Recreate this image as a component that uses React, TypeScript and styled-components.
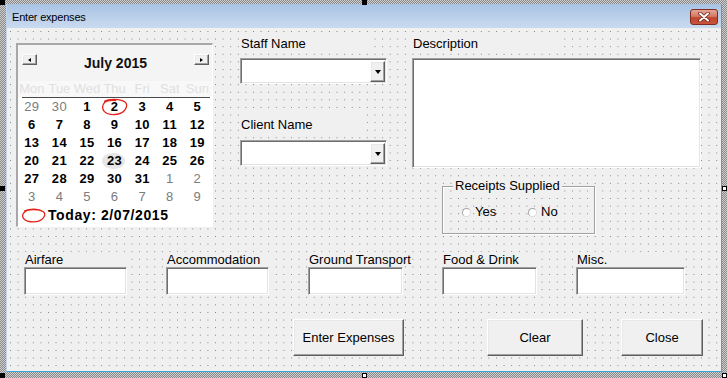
import React from 'react';
import styled, { createGlobalStyle, css } from 'styled-components';

const Global = createGlobalStyle`
  html, body { margin: 0; padding: 0; background: #ffffff; }
  body { font-family: "Liberation Sans", Arial, sans-serif; }
  * { box-sizing: border-box; }
`;

const sunken = css`
  border-style: solid;
  border-width: 1px;
  border-color: #a0a0a0 #ffffff #ffffff #a0a0a0;
  box-shadow: inset 1px 1px 0 #6e6e6e, inset -1px -1px 0 #e3e3e3;
  background: #ffffff;
`;

const raised = css`
  border-style: solid;
  border-width: 1px;
  border-color: #ffffff #5f5f5f #5f5f5f #ffffff;
  box-shadow: inset -1px -1px 0 #a0a0a0, inset 1px 1px 0 #e8e8e8;
  background: #f0f0f0;
`;

const Stage = styled.div`
  position: relative;
  width: 727px;
  height: 378px;
  padding: 4px 5px 6px 6px;
  background: repeating-conic-gradient(#8a8a8a 0 25%, #cdcdcd 0 50%) 0 0 / 2px 2px;
  overflow: hidden;
`;

const Handle = styled.div<{ $x: number; $y: number; $filled?: boolean }>`
  position: absolute;
  left: ${(p) => p.$x}px;
  top: ${(p) => p.$y}px;
  width: 5px;
  height: 5px;
  border: 1px solid #000;
  background: ${(p) => (p.$filled ? '#000' : '#fff')};
`;

const Window = styled.div`
  width: 716px;
  height: 368px;
  display: flex;
  flex-direction: column;
  border-left: 1px solid #c2d5ea;
  border-right: 1px solid #3ba7d9;
  border-bottom: 1px solid #3ba7d9;
  background: #f0f0f0;
`;

const TitleBar = styled.div`
  height: 24px;
  flex: none;
  display: flex;
  align-items: center;
  justify-content: space-between;
  padding: 2px 3px 0 5px;
  background: linear-gradient(#a9c3e4, #c9daef);
`;

const TitleText = styled.span`
  font-size: 11px;
  letter-spacing: -0.2px;
  color: #000;
`;

const CloseX = styled.div`
  width: 28px;
  height: 16px;
  border: 1px solid #7c2c20;
  border-radius: 3px;
  background: linear-gradient(#e6a596 0%, #d57a66 45%, #c2452c 55%, #c8553c 100%);
  display: flex;
  align-items: center;
  justify-content: center;
`;

const Client = styled.div`
  flex: 1;
  padding-top: 8px;
  background-color: #f0f0f0;
  background-image: conic-gradient(at 1px 1px, transparent 75%, #7e7e7e 0);
  background-size: 7.6px 7.6px;
  background-position: 3px 3px;
`;

const TopSection = styled.div`
  display: flex;
  align-items: flex-start;
  padding-left: 9px;
  height: 198px;
`;

/* Calendar */
const Calendar = styled.div`
  margin-top: 7px;
  width: 197px;
  height: 184px;
  border-style: solid;
  border-width: 2px 1px 1px 2px;
  border-color: #a8a8a8 #ffffff #ffffff #a8a8a8;
  background: #ffffff;
  display: flex;
  flex-direction: column;
`;

const CalHeader = styled.div`
  height: 36px;
  display: flex;
  align-items: flex-start;
  justify-content: space-between;
  padding: 9px 3px 0 4px;
  background: #f4f4f4;
`;

const NavButton = styled.div<{ $dir: 'left' | 'right' }>`
  ${raised};
  width: 15px;
  height: 11px;
  display: flex;
  align-items: center;
  justify-content: center;
  &::after {
    content: '';
    width: 0;
    height: 0;
    border-top: 2.5px solid transparent;
    border-bottom: 2.5px solid transparent;
    ${(p) =>
      p.$dir === 'left'
        ? 'border-right: 3px solid #000;'
        : 'border-left: 3px solid #000;'}
  }
`;

const MonthTitle = styled.div`
  font-size: 14px;
  font-weight: bold;
  line-height: 18px;
  color: #111;
`;

const DayNames = styled.div`
  display: grid;
  grid-template-columns: repeat(7, 27.6px);
  height: 16px;
  background: #f8f8f8;
  font-size: 13px;
  line-height: 16px;
  color: #e0e0e0;
  text-align: center;
`;

const Rule = styled.div`
  height: 1px;
  margin: 0 2px 0 4px;
  background: #4a4a4a;
`;

const DateGrid = styled.div`
  display: grid;
  grid-template-columns: repeat(7, 27.6px);
  grid-auto-rows: 18px;
`;

const DateCell = styled.div<{ $other?: boolean; $hover?: boolean }>`
  position: relative;
  text-align: center;
  font-size: 13px;
  line-height: 18px;
  letter-spacing: 0.3px;
  font-weight: ${(p) => (p.$other ? 'normal' : 'bold')};
  color: ${(p) => (p.$other ? '#7c7c7c' : '#000')};
  ${(p) =>
    p.$hover &&
    css`
      &::before {
        content: '';
        position: absolute;
        left: 1px;
        top: 1px;
        width: 23px;
        height: 16px;
        border-radius: 50%;
        background: #e6e6e6;
        z-index: 0;
      }
    `}
`;

const CellText = styled.span`
  position: relative;
  z-index: 1;
`;

const CircleMark = styled.svg`
  position: absolute;
  left: 0;
  top: 0;
  z-index: 2;
  pointer-events: none;
`;

const TodayRow = styled.div`
  height: 18px;
  display: flex;
  align-items: center;
  padding-left: 3px;
  gap: 2px;
  font-size: 14px;
  font-weight: bold;
  letter-spacing: 0.6px;
  color: #000;
`;

/* Middle & right columns */
const Column = styled.div<{ $ml: number; $w: number }>`
  margin-left: ${(p) => p.$ml}px;
  width: ${(p) => p.$w}px;
  display: flex;
  flex-direction: column;
  align-items: flex-start;
`;

const Label = styled.div<{ $w: number; $mt?: number; $pt?: number }>`
  width: ${(p) => p.$w}px;
  margin-top: ${(p) => p.$mt ?? 0}px;
  padding-top: ${(p) => p.$pt ?? 0}px;
  padding-left: 1px;
  font-size: 13px;
  line-height: 16px;
  color: #000;
  background: #f0f0f0;
  white-space: nowrap;
`;

const Combo = styled.div<{ $mt: number }>`
  ${sunken};
  margin-top: ${(p) => p.$mt}px;
  width: 147px;
  height: 26px;
  display: flex;
  justify-content: flex-end;
  padding: 2px 1px 1px 2px;
`;

const DropButton = styled.div`
  ${raised};
  width: 15px;
  height: 100%;
  display: flex;
  align-items: center;
  justify-content: center;
  &::after {
    content: '';
    margin-top: 1px;
    width: 0;
    height: 0;
    border-left: 3.5px solid transparent;
    border-right: 3.5px solid transparent;
    border-top: 4px solid #000;
  }
`;

const TextBox = styled.div<{ $w: number | string; $h: number; $mt?: number }>`
  ${sunken};
  width: ${(p) => (typeof p.$w === 'number' ? `${p.$w}px` : p.$w)};
  height: ${(p) => p.$h}px;
  margin-top: ${(p) => p.$mt ?? 0}px;
`;

const Frame = styled.fieldset`
  margin: 10px 0 0 30px;
  width: 153px;
  height: 56px;
  padding: 0 0 0 9px;
  border: 1px solid #a0a0a0;
  box-shadow: 1px 1px 0 #ffffff, inset 1px 1px 0 #ffffff;
  min-width: 0;
`;

const Legend = styled.legend`
  padding: 0 2px;
  margin-left: 1px;
  font-size: 13px;
  line-height: 16px;
  color: #000;
  background: #f0f0f0;
`;

const RadioRow = styled.div`
  display: flex;
  margin-top: 11px;
  padding-left: 10px;
`;

const Option = styled.label`
  width: 69px;
  display: flex;
  align-items: center;
  gap: 4px;
  font-size: 13px;
  line-height: 14px;
  color: #000;
`;

const RadioDot = styled.span`
  width: 9px;
  height: 9px;
  border-radius: 50%;
  border: 1px solid #a6a6a6;
  border-right-color: #dcdcdc;
  border-bottom-color: #dcdcdc;
  background: #ffffff;
`;

/* Bottom fields */
const FieldsRow = styled.div`
  display: flex;
  gap: 39px;
  margin-top: 18px;
  padding-left: 17px;
`;

const Field = styled.div<{ $w: number }>`
  width: ${(p) => p.$w}px;
  display: flex;
  flex-direction: column;
`;

const FieldLabel = styled.div`
  height: 15px;
  font-size: 13px;
  line-height: 15px;
  padding-left: 1px;
  white-space: nowrap;
  color: #000;
  background: #f0f0f0;
`;

const ButtonsRow = styled.div`
  display: flex;
  margin-top: 24px;
  padding-left: 286px;
`;

const CmdButton = styled.div<{ $w: number; $mr?: number }>`
  ${raised};
  width: ${(p) => p.$w}px;
  height: 37px;
  margin-right: ${(p) => p.$mr ?? 0}px;
  display: flex;
  align-items: center;
  justify-content: center;
  font-size: 13px;
  color: #000;
`;

const dayNames = ['Mon', 'Tue', 'Wed', 'Thu', 'Fri', 'Sat', 'Sun'];
type D = { n: number; o?: boolean };
const dates: D[] = [
  { n: 29, o: true }, { n: 30, o: true }, { n: 1 }, { n: 2 }, { n: 3 }, { n: 4 }, { n: 5 },
  ...[6, 7, 8, 9, 10, 11, 12, 13, 14, 15, 16, 17, 18, 19, 20, 21, 22, 23, 24, 25, 26, 27, 28, 29, 30, 31].map((n) => ({ n })),
  { n: 1, o: true }, { n: 2, o: true },
  ...[3, 4, 5, 6, 7, 8, 9].map((n) => ({ n, o: true })),
];

const RedLoop = ({ w, h }: { w: number; h: number }) => (
  <svg width={w} height={h} viewBox={`0 0 ${w} ${h}`}>
    <path
      d={`M${w * 0.12} ${h * 0.2} C ${w * 0.35} ${h * 0.05}, ${w * 0.7} ${h * 0.02}, ${w * 0.9} ${h * 0.25}
         C ${w * 1.02} ${h * 0.45}, ${w * 0.9} ${h * 0.92}, ${w * 0.5} ${h * 0.93}
         C ${w * 0.12} ${h * 0.94}, ${w * 0.0} ${h * 0.6}, ${w * 0.1} ${h * 0.35}
         C ${w * 0.2} ${h * 0.12}, ${w * 0.45} ${h * 0.1}, ${w * 0.62} ${h * 0.12}`}
      fill="none"
      stroke="#e4231b"
      strokeWidth="1.3"
    />
  </svg>
);

export default function App() {
  return (
    <>
      <Global />
      <Stage>
        <Window>
          <TitleBar>
            <TitleText>Enter expenses</TitleText>
            <CloseX>
              <svg width="14" height="10" viewBox="0 0 14 10">
                <path d="M3 1.5 L11 8.5 M11 1.5 L3 8.5" stroke="#6b2218" strokeWidth="3.6" strokeLinecap="round" />
                <path d="M3 1.5 L11 8.5 M11 1.5 L3 8.5" stroke="#ffffff" strokeWidth="2" strokeLinecap="round" />
              </svg>
            </CloseX>
          </TitleBar>
          <Client>
            <TopSection>
              <Calendar>
                <CalHeader>
                  <NavButton $dir="left" />
                  <MonthTitle>July 2015</MonthTitle>
                  <NavButton $dir="right" />
                </CalHeader>
                <DayNames>
                  {dayNames.map((d) => (
                    <span key={d}>{d}</span>
                  ))}
                </DayNames>
                <Rule />
                <DateGrid>
                  {dates.map((d, i) => (
                    <DateCell key={i} $other={d.o} $hover={!d.o && d.n === 23}>
                      <CellText>{d.n}</CellText>
                      {!d.o && d.n === 2 && (
                        <CircleMark width="27" height="18" viewBox="0 0 27 18">
                          <path
                            d="M3 3.5 C 8 0.5, 19 0.5, 24 4 C 27.5 7, 25 16, 14 16.5 C 3 17, 0 11, 2.5 6 C 4 3, 9 2, 15 2.5"
                            fill="none"
                            stroke="#e4231b"
                            strokeWidth="1.3"
                          />
                        </CircleMark>
                      )}
                    </DateCell>
                  ))}
                </DateGrid>
                <TodayRow>
                  <RedLoop w={25} h={15} />
                  <span>Today: 2/07/2015</span>
                </TodayRow>
              </Calendar>

              <Column $ml={27} $w={147}>
                <Label $w={133}>Staff Name</Label>
                <Combo $mt={6}>
                  <DropButton />
                </Combo>
                <Label $w={126} $mt={28} $pt={5}>Client Name</Label>
                <Combo $mt={7}>
                  <DropButton />
                </Combo>
              </Column>

              <Column $ml={25} $w={289}>
                <Label $w={150}>Description</Label>
                <TextBox $w={289} $h={110} $mt={6} />
                <Frame>
                  <Legend>Receipts Supplied</Legend>
                  <RadioRow>
                    <Option>
                      <RadioDot />
                      Yes
                    </Option>
                    <Option>
                      <RadioDot />
                      No
                    </Option>
                  </RadioRow>
                </Frame>
              </Column>
            </TopSection>

            <FieldsRow>
              {[
                ['Airfare', 103],
                ['Accommodation', 103],
                ['Ground Transport', 95],
                ['Food & Drink', 95],
                ['Misc.', 109],
              ].map(([label, w]) => (
                <Field key={label as string} $w={w as number}>
                  <FieldLabel>{label}</FieldLabel>
                  <TextBox $w="100%" $h={28} />
                </Field>
              ))}
            </FieldsRow>

            <ButtonsRow>
              <CmdButton $w={111} $mr={83}>Enter Expenses</CmdButton>
              <CmdButton $w={96} $mr={38}>Clear</CmdButton>
              <CmdButton $w={82}>Close</CmdButton>
            </ButtonsRow>
          </Client>
        </Window>

        <Handle $x={0} $y={0} $filled />
        <Handle $x={362} $y={0} $filled />
        <Handle $x={0} $y={186} $filled />
        <Handle $x={0} $y={373} $filled />
        <Handle $x={722} $y={186} />
        <Handle $x={362} $y={373} />
        <Handle $x={722} $y={373} />
      </Stage>
    </>
  );
}
